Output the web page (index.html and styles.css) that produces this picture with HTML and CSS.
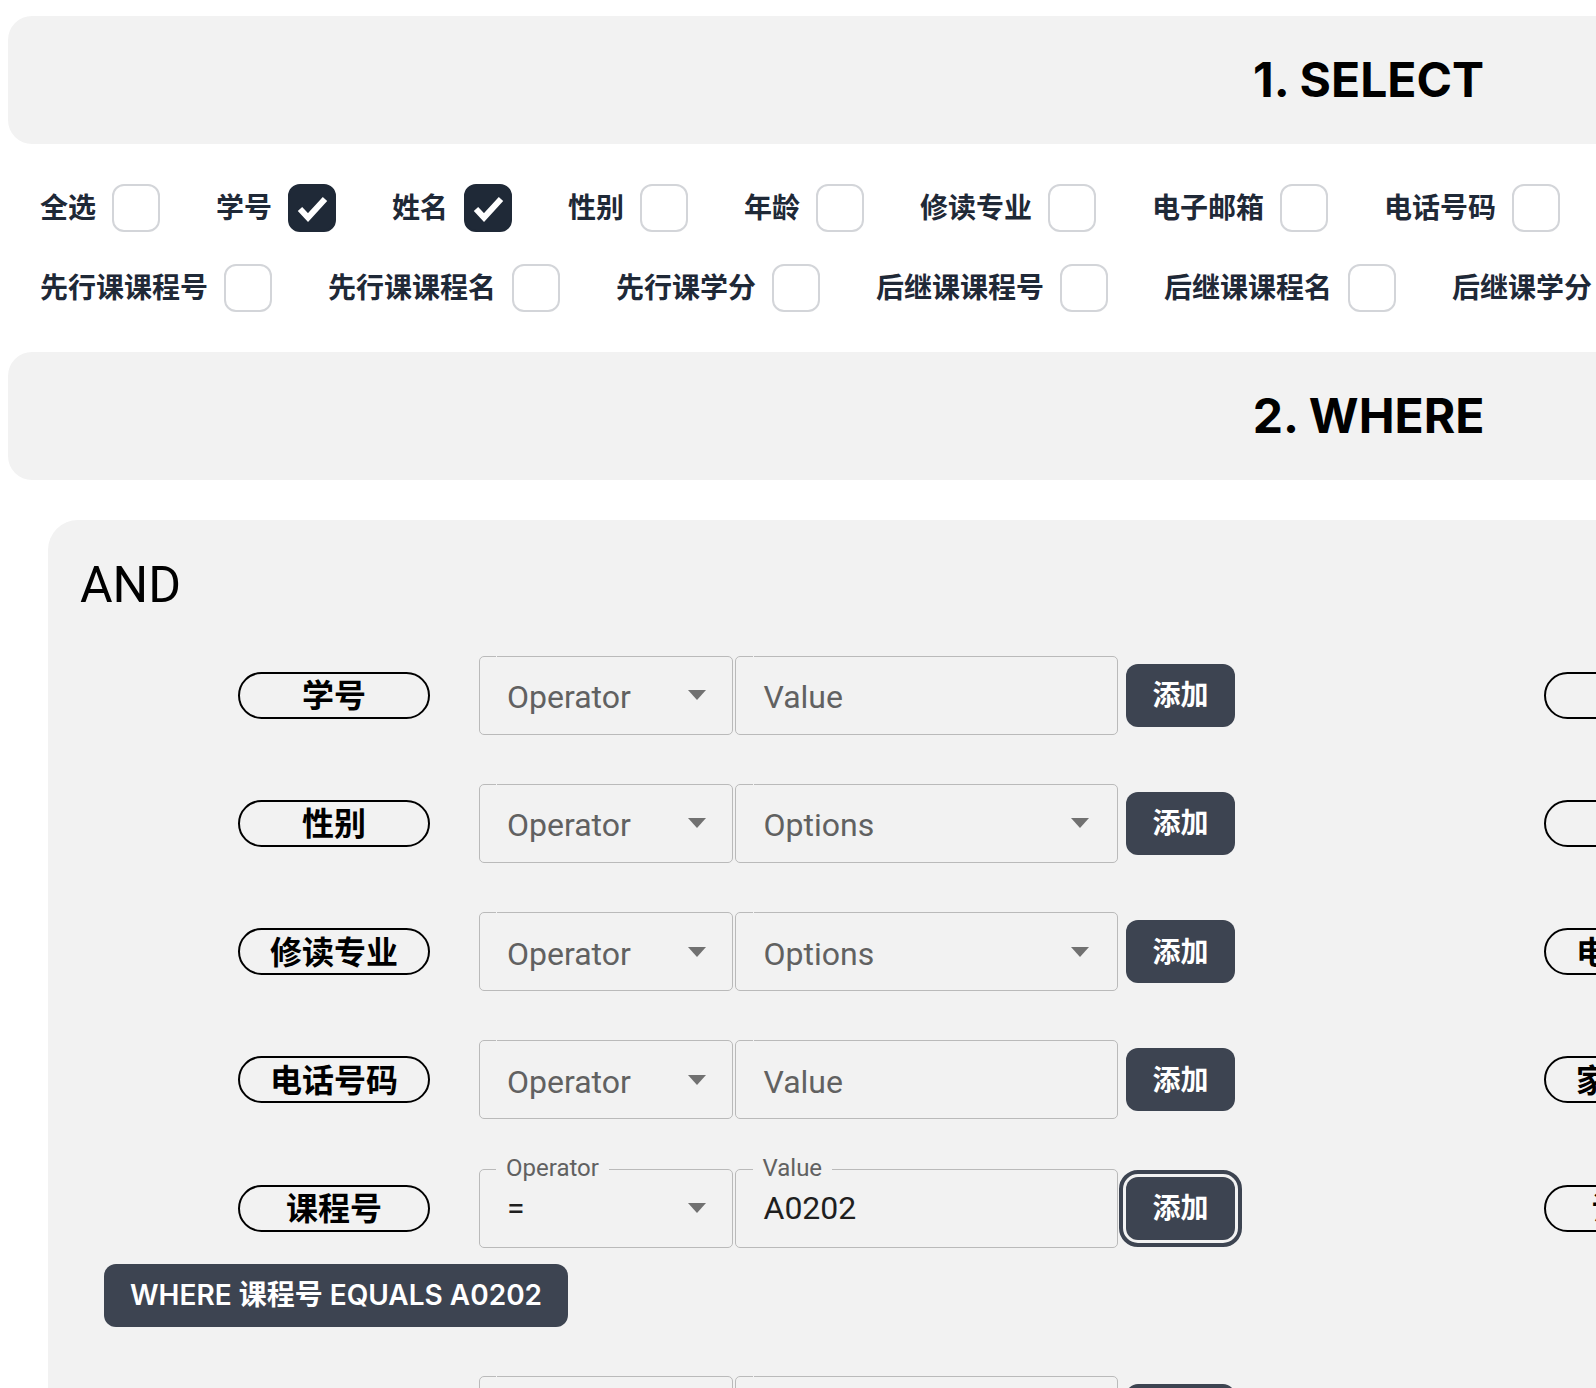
FILE: index.html
```html
<!DOCTYPE html>
<html lang="zh">
<head>
<meta charset="utf-8">
<title>Query Builder</title>
<link rel="stylesheet" href="styles.css">
</head>
<body>
<div class="page">
  <header class="section-head"><h1>1. SELECT</h1></header>

  <div class="fields">
    <div class="field-row">
      <label class="pick"><span class="name">全选</span><span class="box"></span></label>
      <label class="pick"><span class="name">学号</span><span class="box checked"><svg viewBox="0 0 48 48"><path d="M12 25l8 8.5 17-18.5" fill="none" stroke="#fff" stroke-width="6"/></svg></span></label>
      <label class="pick"><span class="name">姓名</span><span class="box checked"><svg viewBox="0 0 48 48"><path d="M12 25l8 8.5 17-18.5" fill="none" stroke="#fff" stroke-width="6"/></svg></span></label>
      <label class="pick"><span class="name">性别</span><span class="box"></span></label>
      <label class="pick"><span class="name">年龄</span><span class="box"></span></label>
      <label class="pick"><span class="name">修读专业</span><span class="box"></span></label>
      <label class="pick"><span class="name">电子邮箱</span><span class="box"></span></label>
      <label class="pick"><span class="name">电话号码</span><span class="box"></span></label>
    </div>
    <div class="field-row">
      <label class="pick"><span class="name">先行课课程号</span><span class="box"></span></label>
      <label class="pick"><span class="name">先行课课程名</span><span class="box"></span></label>
      <label class="pick"><span class="name">先行课学分</span><span class="box"></span></label>
      <label class="pick"><span class="name">后继课课程号</span><span class="box"></span></label>
      <label class="pick"><span class="name">后继课课程名</span><span class="box"></span></label>
      <label class="pick"><span class="name">后继课学分</span><span class="box"></span></label>
    </div>
  </div>

  <header class="section-head"><h1>2. WHERE</h1></header>

  <section class="cond-box">
    <h2 class="and">AND</h2>
    <div class="cond-grid">

      <div class="cell">
        <div class="cond-row">
          <span class="pill">学号</span>
          <div class="mui sel op"><fieldset class="outline"><legend></legend></fieldset><span class="ph">Operator</span><i class="caret"></i></div>
          <div class="mui val"><fieldset class="outline"><legend></legend></fieldset><span class="ph">Value</span></div>
          <button class="add">添加</button>
        </div>
      </div>
      <div class="cell">
        <div class="cond-row">
          <span class="pill">姓名</span>
          <div class="mui sel op"><fieldset class="outline"><legend></legend></fieldset><span class="ph">Operator</span><i class="caret"></i></div>
          <div class="mui val"><fieldset class="outline"><legend></legend></fieldset><span class="ph">Value</span></div>
          <button class="add">添加</button>
        </div>
      </div>

      <div class="cell">
        <div class="cond-row">
          <span class="pill">性别</span>
          <div class="mui sel op"><fieldset class="outline"><legend></legend></fieldset><span class="ph">Operator</span><i class="caret"></i></div>
          <div class="mui sel val"><fieldset class="outline"><legend></legend></fieldset><span class="ph">Options</span><i class="caret"></i></div>
          <button class="add">添加</button>
        </div>
      </div>
      <div class="cell">
        <div class="cond-row">
          <span class="pill">年龄</span>
          <div class="mui sel op"><fieldset class="outline"><legend></legend></fieldset><span class="ph">Operator</span><i class="caret"></i></div>
          <div class="mui val"><fieldset class="outline"><legend></legend></fieldset><span class="ph">Value</span></div>
          <button class="add">添加</button>
        </div>
      </div>

      <div class="cell">
        <div class="cond-row">
          <span class="pill">修读专业</span>
          <div class="mui sel op"><fieldset class="outline"><legend></legend></fieldset><span class="ph">Operator</span><i class="caret"></i></div>
          <div class="mui sel val"><fieldset class="outline"><legend></legend></fieldset><span class="ph">Options</span><i class="caret"></i></div>
          <button class="add">添加</button>
        </div>
      </div>
      <div class="cell">
        <div class="cond-row">
          <span class="pill">电子邮箱</span>
          <div class="mui sel op"><fieldset class="outline"><legend></legend></fieldset><span class="ph">Operator</span><i class="caret"></i></div>
          <div class="mui val"><fieldset class="outline"><legend></legend></fieldset><span class="ph">Value</span></div>
          <button class="add">添加</button>
        </div>
      </div>

      <div class="cell">
        <div class="cond-row">
          <span class="pill">电话号码</span>
          <div class="mui sel op"><fieldset class="outline"><legend></legend></fieldset><span class="ph">Operator</span><i class="caret"></i></div>
          <div class="mui val"><fieldset class="outline"><legend></legend></fieldset><span class="ph">Value</span></div>
          <button class="add">添加</button>
        </div>
      </div>
      <div class="cell">
        <div class="cond-row">
          <span class="pill">家庭住址</span>
          <div class="mui sel op"><fieldset class="outline"><legend></legend></fieldset><span class="ph">Operator</span><i class="caret"></i></div>
          <div class="mui val"><fieldset class="outline"><legend></legend></fieldset><span class="ph">Value</span></div>
          <button class="add">添加</button>
        </div>
      </div>

      <div class="cell">
        <div class="cond-row">
          <span class="pill">课程号</span>
          <div class="mui sel op filled"><fieldset class="outline"><legend class="label"><span>Operator</span></legend></fieldset><span class="txt">=</span><i class="caret"></i></div>
          <div class="mui val filled"><fieldset class="outline"><legend class="label"><span>Value</span></legend></fieldset><span class="txt">A0202</span></div>
          <button class="add focus">添加</button>
        </div>
        <div class="summary">WHERE 课程号 EQUALS A0202</div>
      </div>
      <div class="cell">
        <div class="cond-row">
          <span class="pill">课程名</span>
          <div class="mui sel op"><fieldset class="outline"><legend></legend></fieldset><span class="ph">Operator</span><i class="caret"></i></div>
          <div class="mui val"><fieldset class="outline"><legend></legend></fieldset><span class="ph">Value</span></div>
          <button class="add">添加</button>
        </div>
      </div>

      <div class="cell">
        <div class="cond-row">
          <span class="pill">学分</span>
          <div class="mui sel op"><fieldset class="outline"><legend></legend></fieldset><span class="ph">Operator</span><i class="caret"></i></div>
          <div class="mui val"><fieldset class="outline"><legend></legend></fieldset><span class="ph">Value</span></div>
          <button class="add">添加</button>
        </div>
      </div>
      <div class="cell">
        <div class="cond-row">
          <span class="pill">成绩</span>
          <div class="mui sel op"><fieldset class="outline"><legend></legend></fieldset><span class="ph">Operator</span><i class="caret"></i></div>
          <div class="mui val"><fieldset class="outline"><legend></legend></fieldset><span class="ph">Value</span></div>
          <button class="add">添加</button>
        </div>
      </div>

    </div>
  </section>
</div>
</body>
</html>
```

FILE: styles.css
```css
html {
  overflow: hidden;
}

body {
  margin: 0;
  background: #ffffff;
  font-family: Inter, "Noto Sans CJK SC", sans-serif;
}

.page {
  width: 2721px;
  padding: 16px 8px 40px;
}

.section-head {
  height: 128px;
  border-radius: 24px;
  background: #f2f2f2;
  display: flex;
  align-items: center;
  justify-content: center;
}

.section-head h1 {
  margin: 0;
  font-family: Inter, "Noto Sans CJK SC", sans-serif;
  font-weight: 700;
  font-size: 48px;
  line-height: 1;
  color: #000;
}

/* ---------- SELECT checkboxes ---------- */
.fields {
  margin: 40px 0 40px 32px;
  display: flex;
  flex-direction: column;
  gap: 32px;
}

.field-row {
  display: flex;
  gap: 56px;
}

.pick {
  display: flex;
  align-items: center;
  gap: 16px;
  height: 48px;
  font-family: Inter, "Noto Sans CJK SC", sans-serif;
  font-weight: 700;
  font-size: 28px;
  color: #1f2937;
  white-space: nowrap;
}

.pick .name {
  margin-bottom: 5px;
}

.box {
  width: 48px;
  height: 48px;
  box-sizing: border-box;
  border: 2px solid #d3d5d9;
  border-radius: 12px;
  background: #fff;
  flex: none;
  display: block;
}

.box.checked {
  background: #1f2937;
  border-color: #1f2937;
  position: relative;
}

.box.checked svg {
  position: absolute;
  left: -2px;
  top: -2px;
  width: 48px;
  height: 48px;
}

/* ---------- WHERE block ---------- */
.cond-box {
  margin: 40px 40px 0;
  padding: 36px 32px 60px;
  border-radius: 30px;
  background: #f2f2f2;
}

.and {
  margin: 0;
  font-family: Roboto, sans-serif;
  font-weight: 400;
  font-size: 50px;
  line-height: 58px;
  color: #000;
}

.cond-grid {
  margin-top: 41.5px;
  display: grid;
  grid-template-columns: 1306px 1306px;
  row-gap: 49.3px;
  align-items: start;
}

.cell {
  display: flex;
  flex-direction: column;
  gap: 16px;
}

.cond-row {
  display: flex;
  align-items: center;
  padding-left: 158px;
}

.pill {
  width: 192px;
  height: 47px;
  box-sizing: border-box;
  border: 2px solid #000;
  border-radius: 24px;
  padding-bottom: 4px;
  display: flex;
  align-items: center;
  justify-content: center;
  margin-right: 48.5px;
  font-family: "Noto Sans CJK SC", sans-serif;
  font-weight: 700;
  font-size: 32px;
  color: #000;
  flex: none;
  white-space: nowrap;
}

.mui {
  position: relative;
  height: 79px;
  box-sizing: border-box;
  padding: 0 28.5px;
  display: flex;
  align-items: center;
  font-family: Roboto, sans-serif;
  font-size: 32px;
  font-weight: 400;
  color: #616161;
  flex: none;
}

.mui .ph {
  padding-top: 4px;
}

.mui.sel {
  justify-content: space-between;
  padding-right: 27.5px;
}

.mui.op {
  width: 254.5px;
}

.mui.val {
  width: 383px;
  margin-left: 2px;
}

.mui.val.sel {
  padding-right: 29px;
}

.mui .txt {
  color: #1f1f1f;
}

.outline {
  position: absolute;
  top: -5px;
  left: 0;
  right: 0;
  bottom: 0;
  margin: 0;
  padding: 0 0 0 16.5px;
  border: 1px solid #bababa;
  border-radius: 5px;
  pointer-events: none;
  text-align: left;
  min-width: 0;
}

.outline legend {
  width: 1px;
  height: 11px;
  padding: 0;
  line-height: 11px;
  font-size: 0;
}

.outline legend.label {
  width: auto;
  padding: 0 10px;
  font-family: Roboto, sans-serif;
  font-size: 24px;
  color: #616161;
  white-space: nowrap;
}

.outline legend.label span {
  position: relative;
  top: -1px;
}

.caret {
  width: 0;
  height: 0;
  border-left: 9.5px solid transparent;
  border-right: 9.5px solid transparent;
  border-top: 10px solid #717171;
  flex: none;
}

.add {
  margin-left: 8px;
  width: 109px;
  height: 63px;
  padding: 0 0 4px;
  border: 0;
  border-radius: 12px;
  background: #3d4451;
  color: #fff;
  font-family: Inter, "Noto Sans CJK SC", sans-serif;
  font-weight: 700;
  font-size: 28px;
  flex: none;
}

.add.focus {
  outline: 4px solid #3d4451;
  outline-offset: 3.5px;
}

.summary {
  align-self: flex-start;
  margin-left: 24px;
  height: 63px;
  box-sizing: border-box;
  padding: 0 26px 4px;
  border-radius: 12px;
  background: #3d4451;
  color: #fff;
  display: flex;
  align-items: center;
  font-family: Inter, "Noto Sans CJK SC", sans-serif;
  font-weight: 600;
  font-size: 28px;
  white-space: nowrap;
}
```
